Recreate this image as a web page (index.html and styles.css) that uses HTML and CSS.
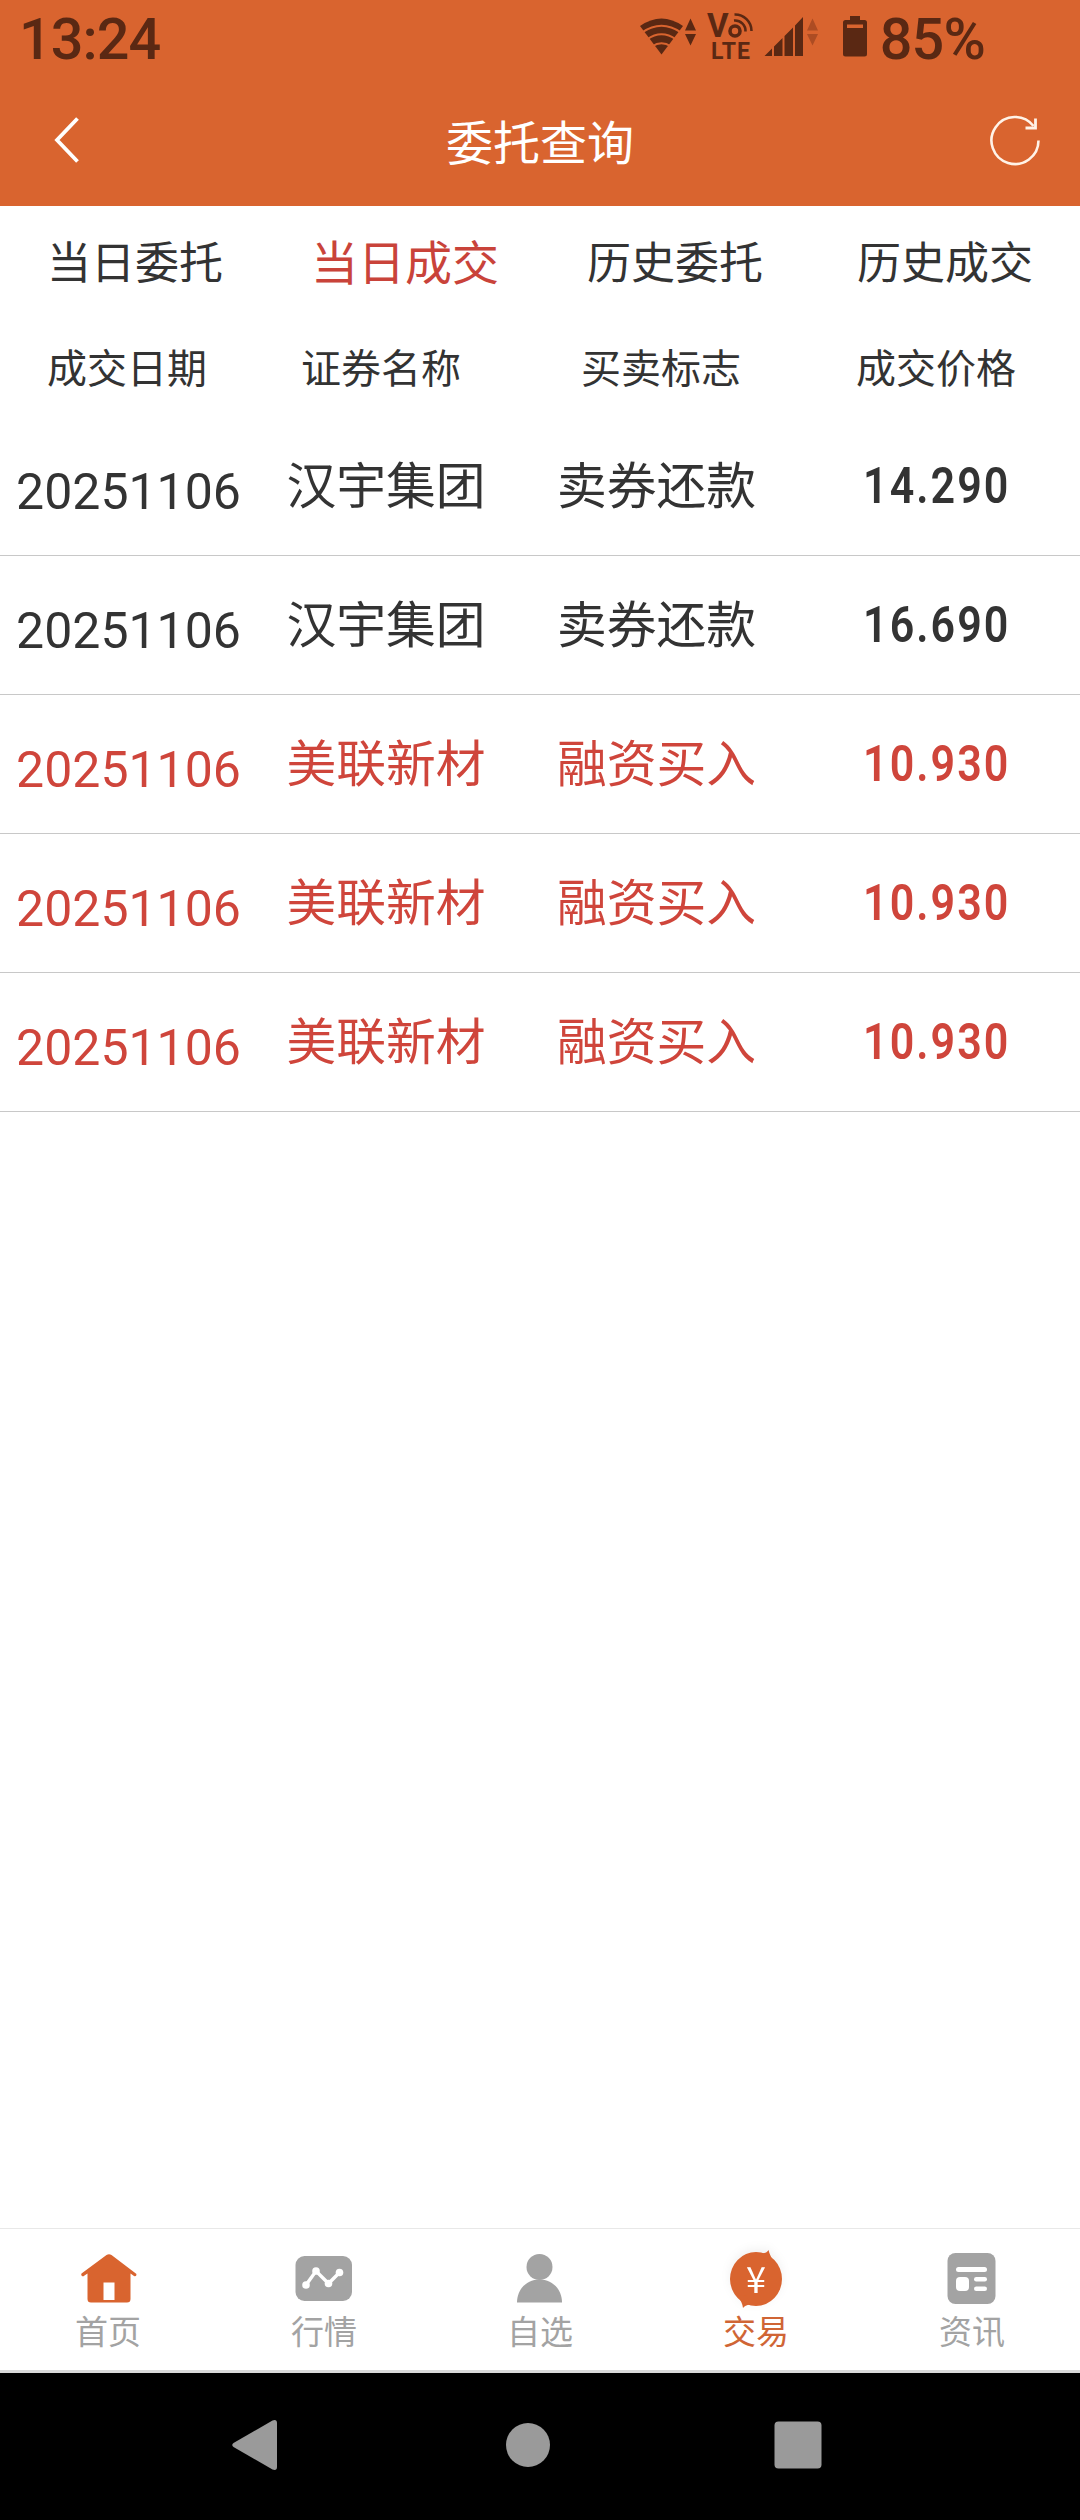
FILE: index.html
```html
<!DOCTYPE html>
<html lang="zh-CN">
<head>
  <meta charset="UTF-8">
  <meta name="viewport" content="width=device-width, initial-scale=1.0">
  <title>委托查询</title>
  <link rel="stylesheet" href="styles.css">
</head>
<body>
  <div class="app">
    <div class="status-bar">
      <span class="clock">13:24</span>
      <div class="status-icons">
        <svg width="240" height="80" viewBox="634 0 240 80">
          <!-- wifi -->
          <path d="M660.5 54.5 L639 26 Q660.5 11 682 26 Z" fill="#5a2813"/>
          <path d="M641 32.5 Q660.5 19 680 32.5 M646 39.5 Q660.5 29 675 39.5 M651 46.5 Q660.5 40 670 46.5" fill="none" stroke="#d9642f" stroke-width="2"/>
          <path d="M684 30.5 L689.5 18.5 L695 30.5 Z M684 34 L695 34 L689.5 45.5 Z" fill="#5a2813"/>
          <!-- volte -->
          <text class="volte-v" x="706" y="37">V</text>
          <circle cx="734" cy="31" r="5" fill="none" stroke="#5a2813" stroke-width="3.6"/>
          <path d="M733 20.5 A10.5 10.5 0 0 1 744.5 31.5 M733.5 14.5 A16.5 16.5 0 0 1 750.5 31" fill="none" stroke="#5a2813" stroke-width="2.6"/>
          <text class="volte-lte" x="710" y="59" textLength="39">LTE</text>
          <!-- signal -->
          <path d="M763.5 56 L771 48.5 V56 Z M773 56 V46.5 L781.5 38 V56 Z M783.5 56 V36 L792 27.5 V56 Z M794 56 V25.5 L802 17 V56 Z" fill="#5a2813"/>
          <path d="M806 30.5 L811.5 18.5 L817 30.5 Z M806 34 L817 34 L811.5 45.5 Z" fill="#ad4c23"/>
          <!-- battery -->
          <path d="M849 16 H859 V20 H863.5 Q866 20 866 22.5 V54 Q866 56.5 863.5 56.5 H844.5 Q842 56.5 842 54 V22.5 Q842 20 844.5 20 H849 Z" fill="#5a2813"/>
          <rect x="846" y="24.5" width="16" height="3.5" fill="#d9642f"/>
        </svg>
        <span class="battery-text">85%</span>
      </div>
    </div>

    <header class="title-bar">
      <svg class="back" width="30" height="50" viewBox="0 0 30 50">
        <path d="M25.5 3.5 L5 25 L25.5 46.5" fill="none" stroke="#fff" stroke-width="3.8"/>
      </svg>
      <h1 class="title">委托查询</h1>
      <svg class="refresh" width="54" height="54" viewBox="0 0 54 54">
        <path d="M50.5 27.5 A23.5 23.5 0 1 1 45.5 13" fill="none" stroke="#fff3e8" stroke-width="2.6"/>
        <path d="M47.5 5.5 V15 H37.5" fill="none" stroke="#fff3e8" stroke-width="2.8"/>
      </svg>
    </header>

    <nav class="tabs">
      <div class="tab">当日委托</div>
      <div class="tab active">当日成交</div>
      <div class="tab">历史委托</div>
      <div class="tab">历史成交</div>
    </nav>

    <div class="table-head">
      <div>成交日期</div>
      <div>证券名称</div>
      <div>买卖标志</div>
      <div>成交价格</div>
    </div>

    <div class="table-body">
      <div class="row">
        <div class="date">20251106</div>
        <div class="name">汉宇集团</div>
        <div class="name">卖券还款</div>
        <div class="price"><span>14.290</span></div>
      </div>
      <div class="row">
        <div class="date">20251106</div>
        <div class="name">汉宇集团</div>
        <div class="name">卖券还款</div>
        <div class="price"><span>16.690</span></div>
      </div>
      <div class="row buy">
        <div class="date">20251106</div>
        <div class="name">美联新材</div>
        <div class="name">融资买入</div>
        <div class="price"><span>10.930</span></div>
      </div>
      <div class="row buy">
        <div class="date">20251106</div>
        <div class="name">美联新材</div>
        <div class="name">融资买入</div>
        <div class="price"><span>10.930</span></div>
      </div>
      <div class="row buy">
        <div class="date">20251106</div>
        <div class="name">美联新材</div>
        <div class="name">融资买入</div>
        <div class="price"><span>10.930</span></div>
      </div>
    </div>

    <nav class="bottom-nav">
      <div class="nav-item">
        <svg width="60" height="60" viewBox="0 0 60 60">
          <path d="M3.5 24.5 L28.5 6 Q31 4.3 33.5 6 L58.5 25 Q58.5 28 56 27 L52.5 24.5 V50 Q52.5 53.5 49 53.5 H13 Q9.5 53.5 9.5 50 V24.5 L5 27.5 Q2.5 27 3.5 24.5 Z" fill="#d9642f"/>
          <rect x="25.5" y="33.5" width="11" height="17.5" fill="#fff"/>
        </svg>
        <span>首页</span>
      </div>
      <div class="nav-item">
        <svg width="60" height="60" viewBox="0 0 60 60">
          <rect x="1.5" y="7" width="56.5" height="45" rx="9" fill="#a3a3a3"/>
          <path d="M12 36 L22 22 L34.5 34.5 L45.5 23.5" fill="none" stroke="#fff" stroke-width="3.4"/>
          <g fill="#fff">
            <circle cx="12" cy="36" r="3.8"/>
            <circle cx="22" cy="22" r="3.8"/>
            <circle cx="34.5" cy="34.5" r="3.8"/>
            <circle cx="45.5" cy="23.5" r="3.8"/>
          </g>
        </svg>
        <span>行情</span>
      </div>
      <div class="nav-item">
        <svg width="60" height="60" viewBox="0 0 60 60">
          <circle cx="29.5" cy="18" r="13" fill="#a3a3a3"/>
          <path d="M7 53.5 C7 40 17 30.5 29.5 30.5 S52 40 52 53.5 Z" fill="#a3a3a3"/>
        </svg>
        <span>自选</span>
      </div>
      <div class="nav-item active">
        <svg class="trade" width="60" height="60" viewBox="0 0 60 60">
          <ellipse cx="30" cy="30" rx="26" ry="27" fill="#d9642f"/>
          <path d="M36 4.5 Q41 4 42.5 1 Q44 8 49 13 L40 14 Z M24 55.5 Q19 56 17 59 Q16 52 11 47 L20 46 Z" fill="#d9642f"/>
          <text class="yen" x="30" y="43.5" text-anchor="middle">¥</text>
        </svg>
        <span>交易</span>
      </div>
      <div class="nav-item">
        <svg width="60" height="60" viewBox="0 0 60 60">
          <rect x="5.5" y="4" width="48" height="51" rx="8" fill="#a3a3a3"/>
          <g fill="#fff">
            <rect x="14" y="18" width="31" height="5" rx="2.5"/>
            <rect x="14" y="28" width="13" height="14" rx="4"/>
            <rect x="32" y="28" width="13" height="4.5" rx="2.2"/>
            <rect x="32" y="37.5" width="13" height="4.5" rx="2.2"/>
          </g>
        </svg>
        <span>资讯</span>
      </div>
    </nav>

    <div class="system-nav">
      <svg width="60" height="60" viewBox="0 0 60 60">
        <path d="M8.5 28 L47.5 5.5 Q52 4 52 8 V52 Q52 56 47.5 54.5 L8.5 32 Q6 30 8.5 28 Z" fill="#9a9a9a"/>
      </svg>
      <svg width="60" height="60" viewBox="0 0 60 60">
        <circle cx="31" cy="30" r="22" fill="#9a9a9a"/>
      </svg>
      <svg width="60" height="60" viewBox="0 0 60 60">
        <rect x="6.5" y="6.5" width="47" height="47" rx="4" fill="#9a9a9a"/>
      </svg>
    </div>
  </div>
</body>
</html>
```

FILE: styles.css
```css
body, html {
  margin: 0;
  padding: 0;
  background-color: #fff;
  font-family: Roboto, 'Noto Sans CJK SC', sans-serif;
  color: #333;
}

svg {
  display: block;
  flex-shrink: 0;
}

.app {
  width: 1080px;
  height: 2520px;
  display: flex;
  flex-direction: column;
  overflow: hidden;
}

.status-bar {
  height: 80px;
  padding: 0 95px 0 19px;
  display: flex;
  justify-content: space-between;
  background-color: #d9642f;
  color: #5a2813;
  font-size: 57.5px;
  line-height: 80px;
  font-weight: 500;
}

.clock {
  letter-spacing: -0.9px;
}

.status-icons {
  display: flex;
  gap: 5px;
}

.battery-text {
  letter-spacing: -0.8px;
}

.volte-v {
  font-family: Roboto, sans-serif;
  font-size: 33px;
  font-weight: 700;
  letter-spacing: 0;
  fill: #5a2813;
}

.volte-lte {
  font-family: Roboto, sans-serif;
  font-size: 23px;
  font-weight: 700;
  fill: #5a2813;
}

.title-bar {
  height: 126px;
  box-sizing: border-box;
  padding: 0 38px 7px 52px;
  display: flex;
  align-items: center;
  background-color: #d9642f;
}

.title {
  flex: 1;
  margin: 0;
  text-align: center;
  color: #fff;
  font-family: 'Noto Sans CJK SC', sans-serif;
  font-size: 47px;
  line-height: 60px;
  font-weight: 400;
}

.back {
  margin-right: 10px;
}

.tabs {
  height: 107px;
  padding-bottom: 4px;
  display: flex;
  align-items: center;
}

.tab {
  flex: 1;
  text-align: center;
  font-family: 'Noto Sans CJK SC', sans-serif;
  font-size: 44px;
  line-height: 60px;
}

.tab.active {
  color: #c9433a;
  font-size: 47px;
}

.table-head {
  height: 98px;
  padding-bottom: 2px;
  display: grid;
  grid-template-columns: 254px 254px 306px 244px;
  align-items: center;
  text-align: center;
  font-family: 'Noto Sans CJK SC', sans-serif;
  font-size: 40px;
  line-height: 50px;
}

.row {
  height: 138px;
  display: grid;
  grid-template-columns: 257px 258px 283px 278px;
  align-items: center;
  text-align: center;
  border-bottom: 1px solid #c8c8c8;
  font-size: 50px;
  line-height: 60px;
}

.row.buy {
  color: #cf453b;
}

.date {
  padding-top: 12px;
}

.name {
  padding-bottom: 8px;
  font-family: 'Noto Sans CJK SC', sans-serif;
  font-size: 49.8px;
}

.price span {
  display: inline-block;
  font-weight: 600;
  letter-spacing: 2.4px;
  transform: scaleX(0.86);
}

.bottom-nav {
  margin-top: auto;
  height: 141px;
  display: flex;
  border-top: 1px solid #e8e8e8;
  border-bottom: 3px solid #d9d9d9;
}

.nav-item {
  flex: 1;
  padding-top: 20px;
  display: flex;
  flex-direction: column;
  align-items: center;
  color: #a3a3a3;
  font-family: 'Noto Sans CJK SC', sans-serif;
  font-size: 33px;
  line-height: 40px;
}

.nav-item span {
  margin-top: 1px;
}

.nav-item.active {
  color: #d06535;
}

.trade {
  overflow: visible;
  filter: drop-shadow(0 -3px 5px rgba(0,0,0,0.06));
}

.yen {
  font-family: 'Noto Sans CJK SC', sans-serif;
  font-size: 36px;
  fill: #fff;
}

.system-nav {
  height: 147px;
  box-sizing: border-box;
  padding: 0 252px 3px 225px;
  display: flex;
  align-items: center;
  justify-content: space-between;
  background-color: #000;
}
```
